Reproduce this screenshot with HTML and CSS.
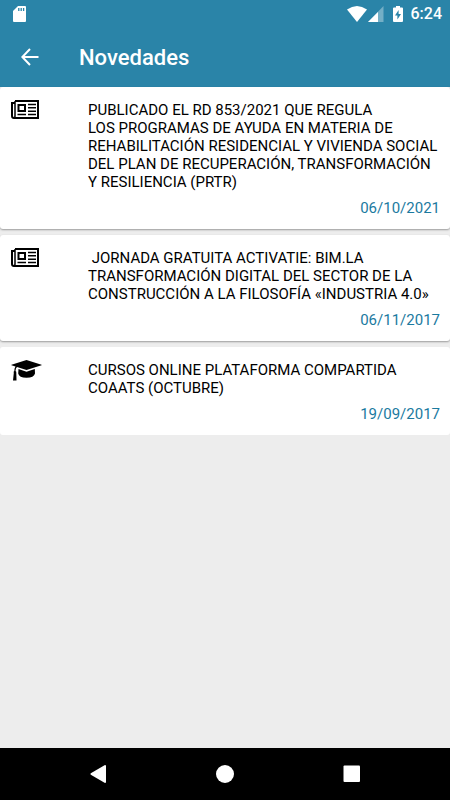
FILE: index.html
```html
<!DOCTYPE html>
<html lang="es">
<head>
<meta charset="utf-8">
<meta name="viewport" content="width=device-width, initial-scale=1">
<title>Novedades</title>
<link rel="stylesheet" href="styles.css">
</head>
<body>
<svg class="defs" aria-hidden="true">
  <symbol id="newspaper" viewBox="0 0 28 19">
    <path fill="none" stroke="currentColor" stroke-width="2" d="M4 1H27V18H3Q1 18 1 16V3H4"/>
    <path fill="none" stroke="currentColor" stroke-width="1.500" d="M4 1V16Q4 18 2.500 18"/>
    <rect x="7.500" y="5" width="6.500" height="6" fill="none" stroke="currentColor" stroke-width="2"/>
    <path fill="none" stroke="currentColor" stroke-width="1.500" d="M17 4.500H25M17 7.800H25M17 11.200H25M6.500 14.500H15M17 14.500H25"/>
  </symbol>
  <symbol id="graduation" viewBox="0 0 31 22">
    <path fill="currentColor" d="M15.500 0 30.500 4.800Q31 5 30.500 5.300L15.500 10 6 7.100Q4.600 8.100 4.500 11Q5.600 11.600 5.300 13L5.500 20.500H2L2.800 13Q2.200 11.600 3.300 11Q3.300 8 4.500 6.500L.5 5.300Q0 5 .5 4.800Z"/>
    <path fill="currentColor" d="M7.500 9.100 15.500 11.700 23.800 9.100 24 13.500Q23 17.700 15.500 17.700T7.200 13.500Z"/>
  </symbol>
</svg>
<header class="top">
  <div class="status">
    <svg class="sd" width="14" height="16" viewBox="0 0 14 16" aria-label="Tarjeta SD"><path fill="#fff" d="M5 0H12Q13 0 13 1V15Q13 16 12 16H1Q0 16 0 15V5Z"/><path stroke="#2a84a8" stroke-width="1.300" d="M5.800 2V5M8.200 2V5M10.600 2V5"/></svg>
    <svg width="20" height="16" viewBox="0 0 20 16" aria-label="Wifi"><path fill="#fff" d="M0 3.500Q10-3.500 20 3.500L10 16Z"/></svg>
    <svg class="signal" width="16" height="16" viewBox="0 0 16 16" aria-label="Señal"><path fill="#fff" opacity=".35" d="M15.500 0V16H0Z"/><path fill="#fff" d="M10 6V16H0Z"/></svg>
    <svg class="battery" width="10" height="16" viewBox="0 0 10 16" aria-label="Batería"><path fill="#fff" d="M3 0H7V1.500H9Q10 1.500 10 2.500V15Q10 16 9 16H1Q0 16 0 15V2.500Q0 1.500 1 1.500H3Z"/><path fill="#2a84a8" d="M5.600 4 2 9.500H4.400V13.500L8 8H5.600Z"/></svg>
    <span class="clock">6:24</span>
  </div>
  <div class="toolbar">
    <button class="back" aria-label="Volver"><svg width="18" height="18" viewBox="0 0 18 18"><path fill="none" stroke="#fff" stroke-width="2" d="M17.500 9H1.500M9 1 1.300 9 9 17"/></svg></button>
    <h1>Novedades</h1>
  </div>
</header>
<main>
  <article class="card">
    <svg class="news" aria-hidden="true"><use href="#newspaper"/></svg>
    <div class="body">
      <h2>PUBLICADO EL RD 853/2021 QUE REGULA LOS&nbsp;PROGRAMAS DE AYUDA EN MATERIA DE REHABILITACIÓN RESIDENCIAL Y VIVIENDA SOCIAL DEL PLAN DE RECUPERACIÓN, TRANSFORMACIÓN Y&nbsp;RESILIENCIA (PRTR)</h2>
      <time datetime="2021-10-06">06/10/2021</time>
    </div>
  </article>
  <article class="card">
    <svg class="news" aria-hidden="true"><use href="#newspaper"/></svg>
    <div class="body">
      <h2>&nbsp;JORNADA GRATUITA ACTIVATIE: BIM.LA TRANSFORMACIÓN DIGITAL DEL SECTOR DE LA CONSTRUCCIÓN A LA FILOSOFÍA «INDUSTRIA 4.0»</h2>
      <time datetime="2017-11-06">06/11/2017</time>
    </div>
  </article>
  <article class="card">
    <svg class="course" aria-hidden="true"><use href="#graduation"/></svg>
    <div class="body">
      <h2>CURSOS ONLINE PLATAFORMA COMPARTIDA COAATS (OCTUBRE)</h2>
      <time datetime="2017-09-19">19/09/2017</time>
    </div>
  </article>
</main>
<nav class="system">
  <button aria-label="Atrás"><svg width="18" height="18" viewBox="0 0 18 18"><path fill="#fff" d="M16 0Q17 0 17 1V17Q17 18 16 18L1.800 9.800Q1 9 1.800 8.200Z"/></svg></button>
  <button aria-label="Inicio"><svg width="18" height="18" viewBox="0 0 18 18"><circle cx="9" cy="9" r="9" fill="#fff"/></svg></button>
  <button aria-label="Recientes"><svg width="18" height="18" viewBox="0 0 18 18"><rect x=".5" y=".5" width="16.500" height="16.500" rx="1" fill="#fff"/></svg></button>
</nav>
</body>
</html>
```
FILE: styles.css
```css
* {
  box-sizing: border-box;
}

body {
  margin: 0;
  min-height: 100vh;
  display: flex;
  flex-direction: column;
  background: #ededed;
  font-family: Roboto, sans-serif;
  color: #000;
}

.defs {
  position: absolute;
  width: 0;
  height: 0;
}

svg {
  display: block;
  flex: none;
}

button {
  padding: 0;
  border: 0;
  background: none;
  display: flex;
  align-items: center;
  justify-content: center;
}

.top {
  background: #2a84a8;
  color: #fff;
}

.status {
  height: 27px;
  padding: 0 8px 0 13px;
  display: flex;
  align-items: center;
}

.sd {
  margin-right: auto;
}

.signal {
  margin-left: 1px;
}

.battery {
  margin: 0 8px 0 9px;
}

.clock {
  font-size: 16px;
  font-weight: 500;
  line-height: 24px;
}

.toolbar {
  height: 60px;
  padding-left: 21px;
  display: flex;
  align-items: center;
  gap: 40px;
}

h1 {
  margin: 0;
  font-size: 22px;
  font-weight: 500;
  line-height: 30px;
  padding-top: 2px;
}

main {
  flex: 1;
  display: flex;
  flex-direction: column;
  gap: 6px;
}

.card {
  display: grid;
  grid-template-columns: 77px 1fr;
  padding: 13px 10px 12px 11px;
  background: #fff;
  border-radius: 3px;
  box-shadow: 0 1px 2px rgba(0, 0, 0, 0.35);
}

.card:last-child {
  box-shadow: none;
}

.news {
  width: 28px;
  height: 19px;
}

.course {
  width: 31px;
  height: 22px;
}

.body {
  padding-top: 1px;
  display: flex;
  flex-direction: column;
  gap: 8px;
}

h2 {
  margin: 0;
  font-size: 15px;
  font-weight: 400;
  line-height: 18px;
}

time {
  align-self: flex-end;
  font-size: 15px;
  line-height: 18px;
  color: #1b7a9f;
}

.system {
  height: 52px;
  padding: 0 35px;
  display: grid;
  grid-template-columns: repeat(3, 1fr);
  background: #000;
}
```
